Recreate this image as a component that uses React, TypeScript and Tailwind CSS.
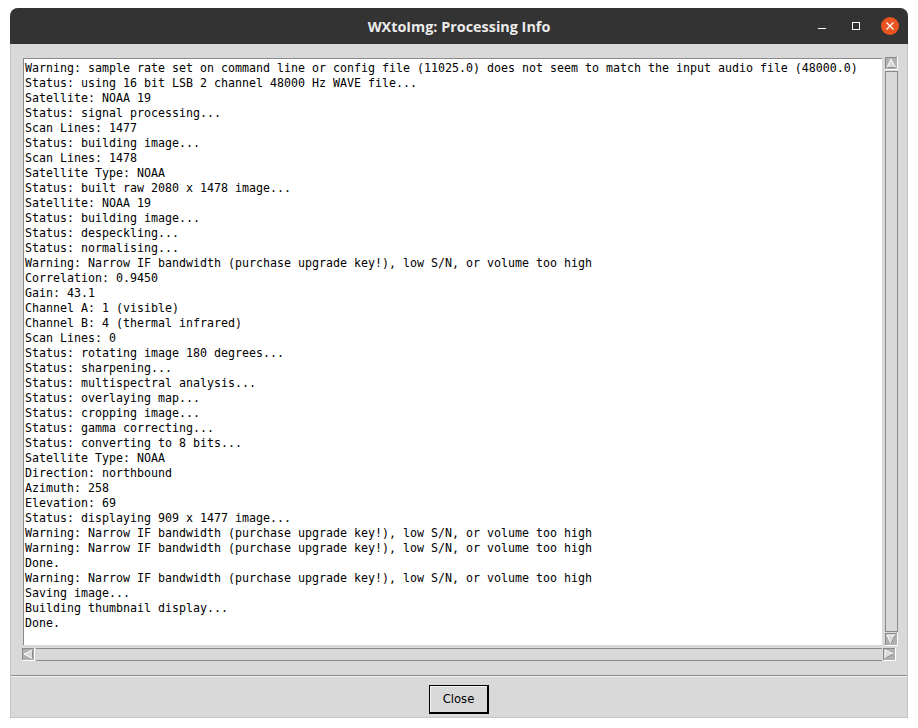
const lines = [
  "Warning: sample rate set on command line or config file (11025.0) does not seem to match the input audio file (48000.0)",
  "Status: using 16 bit LSB 2 channel 48000 Hz WAVE file...",
  "Satellite: NOAA 19",
  "Status: signal processing...",
  "Scan Lines: 1477",
  "Status: building image...",
  "Scan Lines: 1478",
  "Satellite Type: NOAA",
  "Status: built raw 2080 x 1478 image...",
  "Satellite: NOAA 19",
  "Status: building image...",
  "Status: despeckling...",
  "Status: normalising...",
  "Warning: Narrow IF bandwidth (purchase upgrade key!), low S/N, or volume too high",
  "Correlation: 0.9450",
  "Gain: 43.1",
  "Channel A: 1 (visible)",
  "Channel B: 4 (thermal infrared)",
  "Scan Lines: 0",
  "Status: rotating image 180 degrees...",
  "Status: sharpening...",
  "Status: multispectral analysis...",
  "Status: overlaying map...",
  "Status: cropping image...",
  "Status: gamma correcting...",
  "Status: converting to 8 bits...",
  "Satellite Type: NOAA",
  "Direction: northbound",
  "Azimuth: 258",
  "Elevation: 69",
  "Status: displaying 909 x 1477 image...",
  "Warning: Narrow IF bandwidth (purchase upgrade key!), low S/N, or volume too high",
  "Warning: Narrow IF bandwidth (purchase upgrade key!), low S/N, or volume too high",
  "Done.",
  "Warning: Narrow IF bandwidth (purchase upgrade key!), low S/N, or volume too high",
  "Saving image...",
  "Building thumbnail display...",
  "Done.",
];

// triangle corners: first two make the lit edge, the last two the shaded one
function Arrow({ a, b, c }: { a: string; b: string; c: string }) {
  return (
    <svg width="13" height="13" viewBox="0 0 13 13" className="block shrink-0">
      <rect width="13" height="13" fill="#ffffff" />
      <rect width="12" height="12" fill="#8a8a8a" />
      <rect x="1" y="1" width="11" height="11" fill="#b0b0b0" />
      <polygon points={`${a} ${b} ${c}`} fill="#d9d9d9" />
      <polyline points={`${b} ${a} ${c}`} fill="none" stroke="#ffffff" strokeWidth="1" />
      <line x1={b.split(",")[0]} y1={b.split(",")[1]} x2={c.split(",")[0]} y2={c.split(",")[1]} stroke="#8a8a8a" strokeWidth="1" />
    </svg>
  );
}

export default function App() {
  return (
    <div className="h-[728px] w-[918px] bg-white pl-[10px] pt-[8px]">
      <div className="flex h-[710px] w-[898px] flex-col overflow-hidden rounded-t-[8px] bg-[#d9d9d9]">
        <div className="relative flex h-[36px] shrink-0 items-center justify-center bg-[#333333] pt-[1px]">
          <span className="font-['Open_Sans',sans-serif] text-[14.4px] font-bold text-[#ebebeb]">WXtoImg: Processing Info</span>
          <div className="absolute right-[9px] top-[9px] flex items-center">
            <span className="mr-[26px] mt-[5px] h-px w-[8px] bg-white" />
            <span className="mr-[21px] h-[8px] w-[8px] border border-white" />
            <span className="flex h-[18px] w-[18px] items-center justify-center rounded-full bg-[#e95420]">
              <svg width="8" height="8" viewBox="0 0 8 8">
                <path d="M0.5 0.5 L7.5 7.5 M7.5 0.5 L0.5 7.5" stroke="#fff" strokeWidth="1.3" />
              </svg>
            </span>
          </div>
        </div>

        <div className="flex flex-1 flex-col border-x border-b border-[#c4c4c4]">
          <div className="flex h-[632px] shrink-0 flex-col border-b border-[#8a8a8a] pl-[12px] pt-[13px]">
            <div className="flex h-[589px] gap-[3px]">
              <div className="mt-[1px] h-[587px] w-[859px] overflow-hidden border-l border-t border-[#8a8a8a] bg-white pl-[1px] pt-[2px] font-['DejaVu_Sans_Mono',monospace] text-[11.63px] leading-[15px] text-black">
                {lines.map((line, i) => (
                  <div key={i} className="h-[15px] whitespace-pre">{line}</div>
                ))}
              </div>
              <div className="flex w-[13px] flex-col">
                <Arrow a="6,2" b="2,10.5" c="10.5,10.5" />
                <div className="my-[1px] flex-1 border border-[#8a8a8a] bg-[#d9d9d9]" />
                <Arrow a="2,2" b="6,10.5" c="10.5,2" />
              </div>
            </div>
            <div className="-ml-[1px] mt-[2px] flex h-[13px] w-[874px] gap-[1px]">
              <Arrow a="2,6" b="10.5,2" c="10.5,10.5" />
              <div className="flex-1 border-x-0 border-y border-[#8a8a8a] bg-[#d9d9d9]" />
              <Arrow a="2,2" b="10.5,6" c="2,10.5" />
            </div>
          </div>

          <div className="flex flex-1 items-start justify-center border-t border-[#f5f5f5] pt-[8px]">
            <button className="h-[29px] w-[60px] border border-b-2 border-r-2 border-black bg-[#d9d9d9] pt-[1px] font-['DejaVu_Sans',sans-serif] text-[11.6px] text-black shadow-[inset_1px_1px_0_#f5f5f5]">
              Close
            </button>
          </div>
        </div>
      </div>
    </div>
  );
}
